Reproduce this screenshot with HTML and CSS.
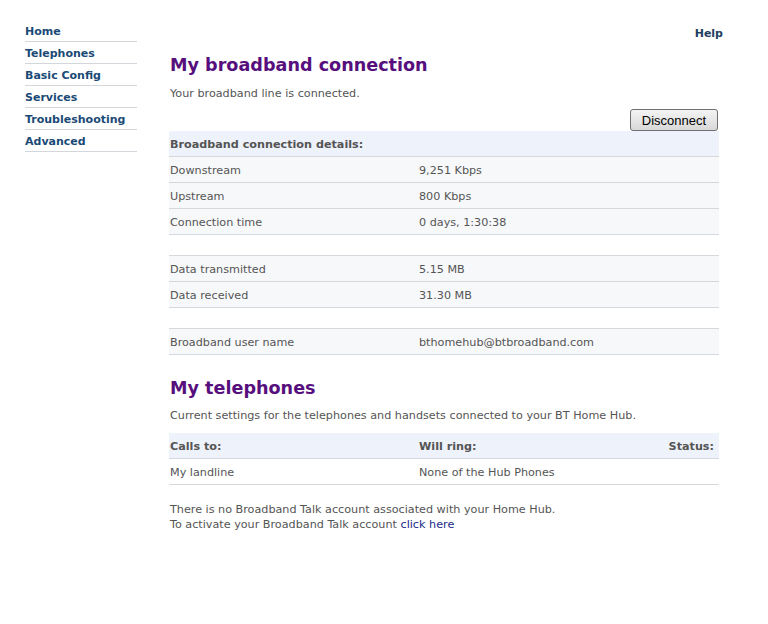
FILE: index.html
```html
<!DOCTYPE html>
<html lang="en">
<head>
    <meta charset="UTF-8">
    <title>BT Home Hub</title>
    <link rel="stylesheet" href="styles.css">
</head>
<body>
    <div class="page">
        <ul class="nav">
            <li><a href="#">Home</a></li>
            <li><a href="#">Telephones</a></li>
            <li><a href="#">Basic Config</a></li>
            <li><a href="#">Services</a></li>
            <li><a href="#">Troubleshooting</a></li>
            <li><a href="#">Advanced</a></li>
        </ul>

        <div class="main">
            <div class="topbar"><a href="#" class="help">Help</a></div>

            <h1>My broadband connection</h1>
            <p class="intro">Your broadband line is connected.</p>

            <div class="actions">
                <button class="btn">Disconnect</button>
            </div>

            <table class="details">
                <colgroup>
                    <col class="col-label">
                    <col>
                </colgroup>
                <thead>
                    <tr>
                        <th colspan="2">Broadband connection details:</th>
                    </tr>
                </thead>
                <tbody>
                    <tr><td>Downstream</td><td>9,251 Kbps</td></tr>
                    <tr><td>Upstream</td><td>800 Kbps</td></tr>
                    <tr><td>Connection time</td><td>0 days, 1:30:38</td></tr>
                    <tr class="spacer"><td colspan="2"></td></tr>
                    <tr><td>Data transmitted</td><td>5.15 MB</td></tr>
                    <tr><td>Data received</td><td>31.30 MB</td></tr>
                    <tr class="spacer"><td colspan="2"></td></tr>
                    <tr><td>Broadband user name</td><td>bthomehub@btbroadband.com</td></tr>
                </tbody>
            </table>

            <h2>My telephones</h2>
            <p class="desc">Current settings for the telephones and handsets connected to your BT Home Hub.</p>

            <table class="details phones">
                <colgroup>
                    <col class="col-label">
                    <col>
                    <col class="col-status">
                </colgroup>
                <thead>
                    <tr>
                        <th>Calls to:</th>
                        <th>Will ring:</th>
                        <th class="status">Status:</th>
                    </tr>
                </thead>
                <tbody>
                    <tr><td>My landline</td><td>None of the Hub Phones</td><td></td></tr>
                </tbody>
            </table>

            <p class="note">
                There is no Broadband Talk account associated with your Home Hub.<br>
                To activate your Broadband Talk account <a href="#">click here</a>
            </p>
        </div>
    </div>
</body>
</html>
```

FILE: styles.css
```css
body {
    margin: 0;
    font-family: "DejaVu Sans", Verdana, sans-serif;
    font-size: 11.2px;
    color: #555;
    background: #fff;
}

.page {
    display: flex;
    align-items: flex-start;
}

/* left navigation */
.nav {
    list-style: none;
    margin: 20px 0 0 25px;
    padding: 0;
    width: 112px;
}

.nav li {
    border-bottom: 1px solid #d3d6da;
}

.nav a {
    display: block;
    padding: 5px 0 3px 0;
    line-height: 13px;
    font-size: 11px;
    font-weight: bold;
    color: #1b4a76;
    text-decoration: none;
}

/* main column */
.main {
    margin-left: 32px;
    width: 554px;
}

.topbar {
    margin-top: 27px;
    line-height: 14px;
    text-align: right;
}

.help {
    font-size: 11px;
    font-weight: bold;
    color: #1f3e60;
    text-decoration: none;
}

h1, h2 {
    margin: 13px 0 0;
    font-size: 17.6px;
    line-height: 22px;
    color: #560f7d;
    padding-left: 1px;
}

h2 {
    margin-top: 22px;
}

.intro, .desc {
    margin: 11px 0 0;
    padding-left: 1px;
    line-height: 14px;
}

.desc {
    margin-top: 10px;
}

.actions {
    margin-top: 8px;
    width: 550px;
    text-align: right;
}

.btn {
    width: 88px;
    height: 22px;
    margin-right: 1px;
    padding: 0;
    font-family: "Liberation Sans", Arial, sans-serif;
    font-size: 13px;
    color: #000;
    border: 1px solid #707070;
    border-radius: 3px;
    background: linear-gradient(#f4f4f4, #e6e6e6 50%, #d8d8d8);
    vertical-align: top;
}

.details {
    width: 550px;
    table-layout: fixed;
    border-collapse: collapse;
}

.col-label {
    width: 249px;
}

.col-status {
    width: 120px;
}

.details th,
.details td {
    height: 23px;
    padding: 2px 5px 0 1px;
    border-bottom: 1px solid #d5d8dc;
    text-align: left;
    vertical-align: middle;
    line-height: 14px;
}

.details th {
    background-color: #eef2fa;
    font-weight: bold;
    color: #555;
}

.details td {
    background-color: #f7f8fa;
}

.details .spacer td {
    height: 20px;
    padding: 0;
    background: #fff;
}

.phones {
    margin-top: 10px;
}

.phones td {
    background: #fff;
}

.phones .status {
    text-align: right;
}

.note {
    margin: 17px 0 0;
    padding-left: 1px;
    line-height: 15px;
}

.note a {
    color: #1a2a8a;
    text-decoration: none;
}
```
